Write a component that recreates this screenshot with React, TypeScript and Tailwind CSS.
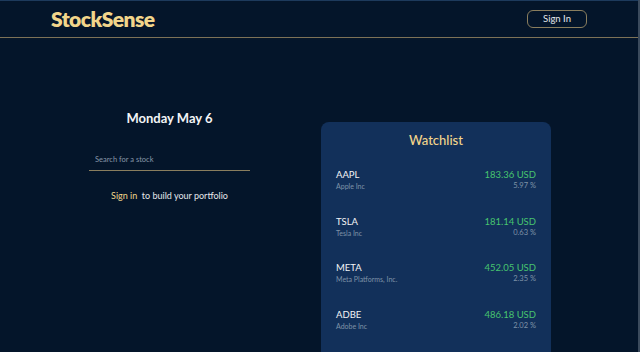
import React from "react";

const stocks = [
  { symbol: "AAPL", name: "Apple Inc", price: "183.36 USD", change: "5.97 %" },
  { symbol: "TSLA", name: "Tesla Inc", price: "181.14 USD", change: "0.63 %" },
  { symbol: "META", name: "Meta Platforms, Inc.", price: "452.05 USD", change: "2.35 %" },
  { symbol: "ADBE", name: "Adobe Inc", price: "486.18 USD", change: "2.02 %" },
];

const Appbar = () => {
  return (
    <div className="flex h-[38px] items-center justify-between border-t border-b border-t-[#1d3a5c] border-b-[#7d7257] pl-[51px] pr-[51px]">
      <div className="text-[21px] font-extrabold tracking-tight text-[#f2d58b]">StockSense</div>
      <button className="h-[18px] w-[60px] rounded-md border border-[#8a7e5e] text-[9.5px] leading-none text-gray-200">
        Sign In
      </button>
    </div>
  );
};

const Watchlist = () => {
  return (
    <div className="w-[230px] rounded-t-lg bg-[#12305a] px-[15px] pt-[9px]">
      <div className="text-center text-[13px] leading-[18px] font-medium text-[#f2d58b]">Watchlist</div>
      <div className="mt-[20px] flex flex-col gap-[24.5px]">
        {stocks.map((s) => (
          <div key={s.symbol} className="flex justify-between">
            <div>
              <div className="text-[9.5px] leading-[12px] text-gray-100">{s.symbol}</div>
              <div className="text-[7px] leading-[10px] text-[#7f93a8]">{s.name}</div>
            </div>
            <div className="text-right">
              <div className="text-[9.5px] leading-[12px] text-[#47c46f]">{s.price}</div>
              <div className="text-[7.5px] leading-[10px] text-[#7f93a8]">{s.change}</div>
            </div>
          </div>
        ))}
      </div>
      <div className="h-[30px]"></div>
    </div>
  );
};

export default function App() {
  return (
    <div
      className="h-[352px] overflow-hidden border-r-2 border-r-[#3b4a5c] bg-[#04152a]"
      style={{ fontFamily: "Lato, 'Noto Sans', sans-serif" }}
    >
      <Appbar />
      <div className="flex items-start pt-[71px]">
        <div className="ml-[89px] w-[161px]">
          <div className="text-center text-[13px] leading-[18px] font-bold text-gray-100">Monday May 6</div>
          <input
            className="mt-[26px] box-border block h-[18px] w-full border-b border-[#8a7e5e] bg-transparent pb-[4px] pl-[6px] text-[7.5px] placeholder:text-[#8796a8] focus:outline-none"
            placeholder="Search for a stock"
          />
          <div className="mt-[19px] text-center text-[9px] leading-[12px] text-gray-200">
            <span className="text-[#f2d58b]">Sign in</span>&nbsp; to build your portfolio
          </div>
        </div>
        <div className="ml-[71px] mt-[13px]">
          <Watchlist />
        </div>
      </div>
    </div>
  );
}
